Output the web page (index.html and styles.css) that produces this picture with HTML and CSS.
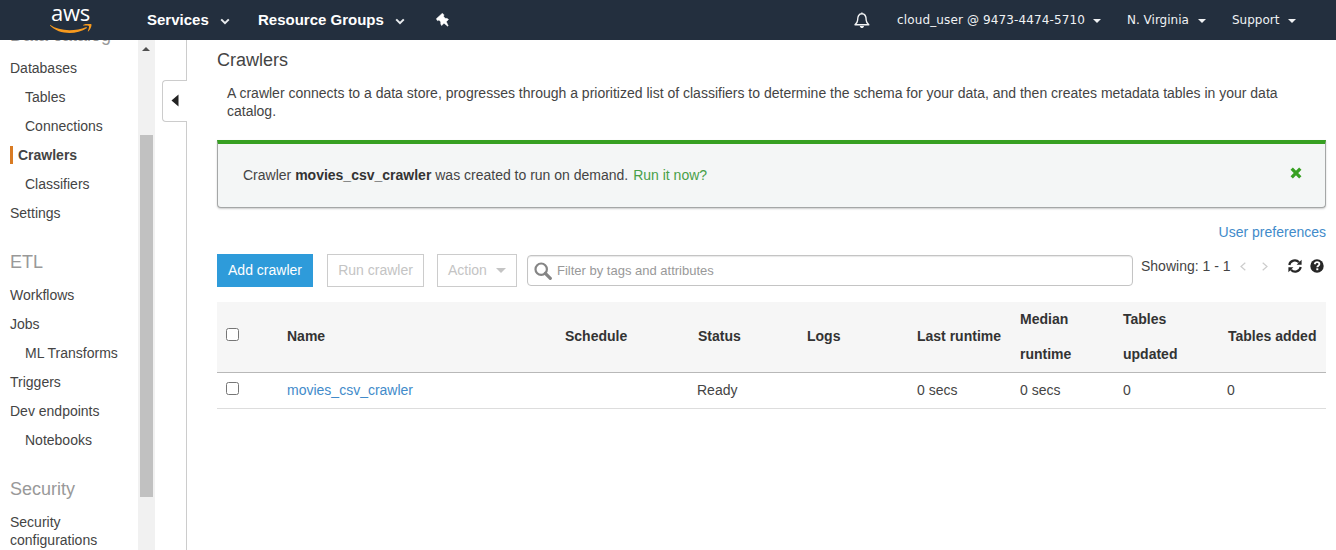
FILE: index.html
```html
<!DOCTYPE html>
<html lang="en">
<head>
<meta charset="utf-8">
<title>Crawlers - AWS Glue</title>
<link rel="stylesheet" href="styles.css">
</head>
<body>
<header class="topbar">
  <div class="logo">
    <span class="logo-text">aws</span>
    <svg class="smile" width="42" height="11" viewBox="0 0 42 11"><path d="M0 .8C9 7.200 24 8 36.400 3l.6 1.100C26 11.200 9 11 0 1.600z" fill="#f79a1e"/><path d="M33 .9c3-1.500 7.500-1.700 8.300-.7.800 1.200-.8 5.400-3 7.400l-.6-.3c1-2.400 1.700-4.600 1.100-5.300-.7-.7-3.300-.6-5.700-.4z" fill="#f79a1e"/></svg>
  </div>
  <nav class="menu">
    <a class="menu-item services">Services<svg class="chev" width="10" height="7" viewBox="0 0 10 7"><path d="M1.200 1.400 5 5.200l3.800-3.800" fill="none" stroke="#e8ebee" stroke-width="2"/></svg></a>
    <a class="menu-item groups">Resource Groups<svg class="chev" width="10" height="7" viewBox="0 0 10 7"><path d="M1.200 1.400 5 5.200l3.800-3.800" fill="none" stroke="#e8ebee" stroke-width="2"/></svg></a>
    <svg class="pin" width="13" height="14" viewBox="0 0 13 14"><path d="M6.400.2 8 1.900l-.5 1.400 1.700 2.100c1.300-.2 2.400.2 3.300 1.100L10.300 8.700l1.900 4.100-.5.400-3.700-3-2.300 2.400c-.9-1.100-1.200-2.300-.9-3.600L3 7l-1.500.7L.3 5.800z" fill="#fff" stroke="#fff" stroke-width=".5" stroke-linejoin="round"/></svg>
  </nav>
  <nav class="account">
    <svg class="bell" width="18" height="18" viewBox="0 0 18 18"><path d="M8.900 1.500v1.200M4.600 9.300c0-4 1.100-6.500 4.300-6.500s4.300 2.500 4.300 6.500c0 2 1 3 2.600 4.400H2c1.600-1.400 2.600-2.400 2.600-4.400z" fill="none" stroke="#f2f4f5" stroke-width="1.400" stroke-linejoin="round"/><path d="M6.800 15h4.200c-.3 1.500-1.200 2-2.100 2s-1.800-.5-2.100-2z" fill="#f2f4f5"/></svg>
    <a class="user">cloud_user @ 9473-4474-5710<i class="tri"></i></a>
    <a class="region">N. Virginia<i class="tri"></i></a>
    <a class="support">Support<i class="tri"></i></a>
  </nav>
</header>
<div class="page">
  <aside class="sidebar">
    <nav class="side-nav">
      <h2>Data catalog</h2>
      <a>Databases</a>
      <a class="sub">Tables</a>
      <a class="sub">Connections</a>
      <a class="active">Crawlers</a>
      <a class="sub">Classifiers</a>
      <a>Settings</a>
      <h2>ETL</h2>
      <a>Workflows</a>
      <a>Jobs</a>
      <a class="sub">ML Transforms</a>
      <a>Triggers</a>
      <a>Dev endpoints</a>
      <a class="sub">Notebooks</a>
      <h2>Security</h2>
      <a>Security configurations</a>
    </nav>
    <div class="scrollbar"><i class="scroll-up"></i><div class="thumb"></div></div>
    <div class="gutter"><button class="collapse" aria-label="Collapse"><svg width="8" height="13" viewBox="0 0 8 13"><path d="M7.500.5v12L.5 6.500z" fill="#222"/></svg></button></div>
  </aside>
  <main class="main">
    <h1>Crawlers</h1>
    <p class="intro">A crawler connects to a data store, progresses through a prioritized list of classifiers to determine the schema for your data, and then creates metadata tables in your data catalog.</p>
    <section class="notice">
      <span>Crawler <b>movies_csv_crawler</b> was created to run on demand. <a class="run-link">Run it now?</a></span>
      <svg class="close" width="12" height="12" viewBox="0 0 12 12"><path d="M1.700 1.700l8.600 8.600M10.300 1.700l-8.600 8.600" stroke="#37a022" stroke-width="3.300"/></svg>
    </section>
    <div class="prefs"><a>User preferences</a></div>
    <div class="toolbar">
      <button class="btn primary">Add crawler</button>
      <button class="btn run">Run crawler</button>
      <button class="btn action">Action<i class="drop"></i></button>
      <label class="search"><svg width="18" height="18" viewBox="0 0 18 18"><circle cx="7.200" cy="7.200" r="5.700" fill="none" stroke="#858585" stroke-width="2.200"/><path d="M11.300 11.300l5 5" stroke="#858585" stroke-width="3.200" stroke-linecap="round"/></svg><input type="text" placeholder="Filter by tags and attributes"></label>
      <div class="pager">
        <span class="showing">Showing: 1 - 1</span>
        <svg class="prev" width="6" height="9" viewBox="0 0 6 9"><path d="M5.300.8 1 4.500l4.300 3.700" fill="none" stroke="#ccc" stroke-width="1.200"/></svg>
        <svg class="next" width="6" height="9" viewBox="0 0 6 9"><path d="M.7.800 5 4.500.7 8.200" fill="none" stroke="#ccc" stroke-width="1.200"/></svg>
        <svg class="refresh" width="14" height="14" viewBox="0 0 14 14"><path d="M1.300 6a5.600 5.600 0 0 1 9.700-2.700M12.700 8A5.600 5.600 0 0 1 3 10.700" fill="none" stroke="#262626" stroke-width="2.200"/><path d="M13.600.8v5H8.600zM.4 13.200v-5h5z" fill="#262626"/></svg>
        <svg class="help" width="14" height="14" viewBox="0 0 14 14"><circle cx="7" cy="7" r="6.700" fill="#262626"/><path d="M4.700 5.200C5 3.700 6 3.200 7.100 3.200c1.300 0 2.300.7 2.300 1.900 0 1.700-2.100 1.500-2.100 3.200" fill="none" stroke="#fff" stroke-width="1.800"/><path d="M6.300 9.300h2v1.900h-2z" fill="#fff"/></svg>
      </div>
    </div>
    <table class="grid">
      <colgroup><col class="c-check"><col class="c-name"><col class="c-schedule"><col class="c-status"><col class="c-logs"><col class="c-last"><col class="c-median"><col class="c-updated"><col class="c-added"></colgroup>
      <thead><tr><th><input type="checkbox"></th><th>Name</th><th>Schedule</th><th class="status">Status</th><th>Logs</th><th>Last runtime</th><th class="two-line">Median runtime</th><th class="two-line">Tables updated</th><th class="nowrap">Tables added</th></tr></thead>
      <tbody><tr><td><input type="checkbox"></td><td><a>movies_csv_crawler</a></td><td></td><td>Ready</td><td></td><td>0 secs</td><td>0 secs</td><td>0</td><td>0</td></tr></tbody>
    </table>
  </main>
</div>
</body>
</html>
```
FILE: styles.css
```css
* { box-sizing: border-box; }
body {
  margin: 0;
  height: 550px;
  overflow: hidden;
  background: #fff;
  color: #444;
  font: 14px/18px "Liberation Sans", Arial, sans-serif;
}
svg { display: block; flex: none; }
button, input { font: inherit; }

.topbar {
  display: flex;
  align-items: center;
  height: 40px;
  background: #232f3e;
  color: #fff;
}
.logo { width: 42px; margin-left: 50px; height: 40px; }
.logo-text {
  display: block;
  height: 24px;
  line-height: 24px;
  padding-left: 1px;
  font-family: "Open Sans", sans-serif;
  font-size: 22px;
  font-weight: 500;
  letter-spacing: -0.2px;
}
.menu { display: flex; align-items: center; flex: 1; }
.menu-item {
  display: flex;
  align-items: center;
  font-size: 15px;
  font-weight: bold;
}
.services { margin-left: 55px; width: 111px; }
.groups { width: 178px; }
.chev { margin: 2px 0 0 11px; }
.account {
  display: flex;
  align-items: center;
  font-family: "DejaVu Sans", Verdana, sans-serif;
  font-size: 12px;
  color: #f0f2f4;
}
.account a { display: flex; align-items: center; white-space: nowrap; }
.bell { margin-right: 26px; margin-left: -2px; }
.user { width: 230px; letter-spacing: 0.13px; }
.region { width: 105px; }
.support { width: 104px; }
.tri {
  margin: 1px 0 0 9px;
  border: 4px solid transparent;
  border-top-color: #f0f2f4;
  border-bottom: 0;
}
.user .tri { margin-left: 8px; }

.page { display: flex; height: 510px; }
.sidebar { display: flex; width: 187px; overflow: hidden; }
.side-nav { width: 138px; margin-top: -18px; padding-left: 10px; flex: none; }
.side-nav h2 {
  margin: 22px 0 7px;
  font-size: 18px;
  font-weight: normal;
  line-height: 24px;
  color: #999;
}
.side-nav h2:first-child { margin: 1px 0 7px; }
.side-nav a { display: block; padding: 5px 0 6px; }
.side-nav .sub { padding-left: 15px; }
.side-nav .active {
  margin: 5px 0 6px;
  padding: 0 0 0 5px;
  border-left: 3px solid #d97b23;
  font-weight: bold;
}
.scrollbar { width: 17px; padding: 7px 2px 0; background: #f1f1f1; flex: none; }
.scroll-up {
  display: block;
  width: 8px;
  margin: 0 0 0 2px;
  border: 4px solid transparent;
  border-bottom-color: #505050;
  border-top: 0;
}
.thumb { height: 362px; margin: 84px 0 0; width: 13px; background: #c1c1c1; }
.gutter { width: 32px; padding: 40px 0 0 7px; border-right: 1px solid #ccc; }
.collapse {
  display: flex;
  align-items: center;
  width: 25px;
  height: 42px;
  padding: 0 0 2px 8px;
  border: 1px solid #ccc;
  border-right: 0;
  border-radius: 4px 0 0 4px;
  background: #fff;
}

.main { width: 1139px; padding: 8px 0 0 30px; }
h1 { margin: 0; font-size: 18px; line-height: 24px; font-weight: normal; }
.intro { margin: 12px 40px 20px 10px; }
.notice {
  display: flex;
  justify-content: space-between;
  height: 68px;
  padding: 22px 23px 0 25px;
  border: 1px solid #a5a7a7;
  border-top: 4px solid #37a022;
  border-radius: 0 0 4px 4px;
  background: #f4f6f6;
  box-shadow: 0 1px 2px #ccc;
}
.notice b { color: #333; }
.run-link { margin-left: 1px; color: #48a048; }
.close { margin-top: 1px; }
.prefs { margin-top: 15px; text-align: right; }
.prefs a, .grid a { color: #428bca; }

.toolbar { display: flex; margin-top: 13px; height: 33px; }
.btn {
  height: 33px;
  padding: 0 0 2px;
  border: 1px solid #ccc;
  background: #fff;
  color: #c4c4c4;
}
.primary { width: 96px; border-color: #2e9bda; background: #2e9bda; color: #fff; }
.run { width: 97px; margin-left: 14px; }
.action {
  display: flex;
  align-items: center;
  width: 80px;
  margin-left: 13px;
  padding-left: 10px;
}
.drop {
  margin: 2px 0 0 9px;
  border: 5px solid transparent;
  border-top-color: #c4c4c4;
  border-bottom: 0;
}
.search {
  display: flex;
  align-items: center;
  width: 606px;
  height: 31px;
  margin: 1px 0 0 10px;
  padding: 1px 0 0 6px;
  border: 1px solid #c4c4c4;
  border-radius: 4px;
  box-shadow: inset 0 1px 1px #e8e8e8;
}
.search input {
  flex: 1;
  border: 0;
  padding: 0 5px 1px;
  outline: 0;
  background: transparent;
  font-size: 13px;
}
.search input::placeholder { color: #999; }
.pager { display: flex; align-items: center; height: 24px; margin-left: 8px; }
.showing { width: 99px; white-space: nowrap; }
.next { margin-left: 16px; }
.refresh { margin-left: 20px; }
.help { margin-left: 8px; }

.grid {
  width: 1109px;
  margin-top: 15px;
  border-collapse: separate;
  border-spacing: 0;
  table-layout: fixed;
}
.grid th, .grid td {
  padding: 0;
  text-align: left;
  line-height: 35px;
  border-bottom: 1px solid #ddd;
}
.grid th { padding-bottom: 2px; background: #f6f6f6; border-color: #b8b8b8; color: #333; }
.grid .two-line { padding: 0 20px 0 0; }
.grid .status { padding-left: 1px; }
.grid .nowrap { white-space: nowrap; padding-left: 1px; }
.grid input { display: block; width: 13px; height: 13px; margin: -4px 0 0 9px; }
.c-check { width: 70px; }
.c-name { width: 278px; }
.c-schedule { width: 132px; }
.c-status { width: 110px; }
.c-logs { width: 110px; }
.c-last { width: 103px; }
.c-median { width: 103px; }
.c-updated { width: 104px; }
.c-added { width: 99px; }
```
